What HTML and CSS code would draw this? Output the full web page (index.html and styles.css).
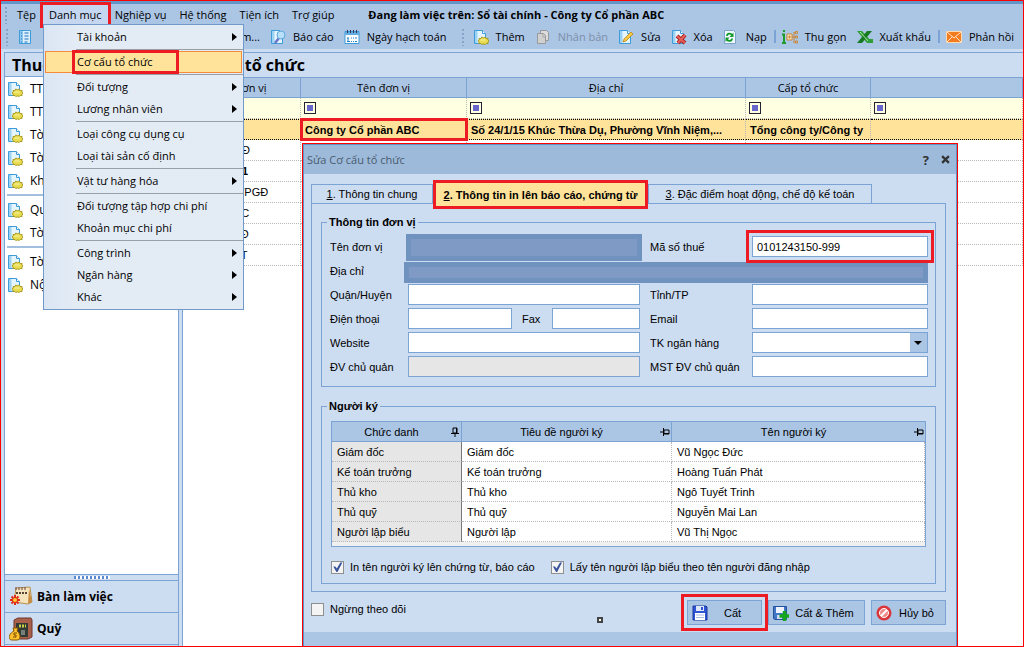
FILE: index.html
```html
<!DOCTYPE html>
<html lang="vi">
<head>
<meta charset="utf-8">
<meta name="viewport" content="width=device-width, initial-scale=1.0">
<title>Cơ cấu tổ chức</title>
<link rel="stylesheet" href="styles.css">
</head>
<body>
<svg class="defs" width="0" height="0">
  <symbol id="page" viewBox="0 0 16 16">
    <path d="M1.500 1.500h8l3 3v10h-11z" fill="#e6f5fd" stroke="#3d9bd8"/>
    <path d="M2 2h2.500v12H2z" fill="#9ed2f3"/>
    <path d="M9.500 1.500v3h3" fill="#fff" stroke="#3d9bd8"/>
  </symbol>
  <symbol id="new" viewBox="0 0 16 16">
    <use href="#page"/>
    <path d="M6 9.500l2 0 .7-1.500 1.800.8 1.800-.8.8 1.500 2 0-.3 1.500 1.200 1-1.200 1 .3 1.500-2 0-.8 1-1.800-.6-1.800.6-.8-1-2 0 .3-1.500-1.200-1 1.200-1z" fill="#e8dc50" stroke="#a5961c" stroke-width=".9"/>
    <path d="M7.500 11h5" stroke="#f8f3a8"/>
  </symbol>
  <symbol id="pin" viewBox="0 0 10 10">
    <path d="M3 1h4v5H3zM1 6.500h8M5 7v3M6.500 1v5" fill="none" stroke="#000"/>
  </symbol>
</svg>
<div class="app">
  <header class="top">
    <nav class="menubar">
      <i class="grip"></i>
      <button>Tệp</button>
      <button class="open marked">Danh mục</button>
      <button>Nghiệp vụ</button>
      <button>Hệ thống</button>
      <button>Tiện ích</button>
      <button>Trợ giúp</button>
      <strong>Đang làm việc trên: Sổ tài chính - Công ty Cổ phần ABC</strong>
    </nav>
    <div class="toolbar">
      <i class="grip"></i>
      <button class="first" aria-label="Danh sách"><svg viewBox="0 0 16 16"><path d="M2.500 1.500h11v13h-11z" fill="#d9effc" stroke="#3d9bd8"/><path d="M3 2h3v12H3z" fill="#8cc8f0"/><path d="M4 4h1M4 7h1M4 10h1M4 13h1M7.500 4h4M7.500 7h4M7.500 10h4M7.500 13h3" stroke="#2070b8"/></svg></button>
      <button class="search">Tìm kiếm...</button>
      <button><svg viewBox="0 0 16 16"><use href="#page"/><path d="M5 14l4-5" stroke="#6a74c8" stroke-width="2.500"/><circle cx="11" cy="6" r="4" fill="#b9e0f8" stroke="#5ca9df"/></svg>Báo cáo</button>
      <button><svg viewBox="0 0 16 16"><path d="M1 2.500h14v12H1z" fill="#fff" stroke="#3d9bd8"/><path d="M1 3h14v3H1z" fill="#62aee2"/><path d="M3.500 1v3M6.500 1v3M9.500 1v3M12.500 1v3" stroke="#335"/><path d="M3 9h2M7 9h1M9 9h1M11 9h2M4 9v4M3 12.500h3M7 12.500h1M9 12.500h1M11 12.500h2" stroke="#2381c8"/></svg>Ngày hạch toán</button>
      <i class="grip"></i>
      <button><svg viewBox="0 0 16 16"><use href="#new"/></svg>Thêm</button>
      <button disabled><svg viewBox="0 0 16 16"><path d="M5.500 1.500h6l2 2v8h-8z" fill="#ddd" stroke="#999"/><path d="M2.500 4.500h6l2 2v8h-8z" fill="#d0d0d0" stroke="#999"/><path d="M8 5v3h2" fill="none" stroke="#aaa"/></svg>Nhân bản</button>
      <button><svg viewBox="0 0 16 16"><use href="#page"/><path d="M5 13l1-3 7-7 2 2-7 7z" fill="#f7c948" stroke="#b98718" stroke-width=".8"/></svg>Sửa</button>
      <button><svg viewBox="0 0 16 16"><use href="#page"/><path d="M6 7l8 7M14 6l-7 8" stroke="#a52020" stroke-width="4"/><path d="M6 7l8 7M14 6l-7 8" stroke="#e8605c" stroke-width="2"/></svg>Xóa</button>
      <button><svg viewBox="0 0 16 16"><path d="M1.500 1.500h9l2 2v11h-11z" fill="#f2f8ff" stroke="#7ba3cc"/><path d="M4 7c0-3 4-3 5-1M9 9.500c0 3-4 3-5 1" fill="none" stroke="#159a2c" stroke-width="1.800"/><path d="M10.500 3.500V8H6.500zM2.500 13V8.500h4z" fill="#159a2c"/></svg>Nạp</button>
      <i class="bar"></i>
      <button><svg viewBox="0 0 16 16"><path d="M2 1v2M0 5.500h2v8M0 14h4" fill="none" stroke="#1f9d2c" stroke-width="2"/><path d="M5 5h5v6H5z" fill="#fbe3bd"/><path d="M5 5h5v6H5zM6 8h3M7.500 6.500v3M10 8h2M12 3v11M12 3.500h1M12 8h1M12 13.500h1M13.500 2.500h2v2h-2zM13.500 7h2v2h-2zM13.500 12h2v2h-2z" fill="none" stroke="#c9873a"/></svg>Thu gọn</button>
      <button><svg viewBox="0 0 16 16"><path d="M0 2h5l11 12h-6z" fill="#2f9e36"/><path d="M10 2h5L5 14H0z" fill="#167a22"/><path d="M3 3l9 10" stroke="#b6e3b0"/><path d="M11 10h5v4h-5z" fill="#2f9e36"/></svg>Xuất khẩu</button>
      <i class="bar"></i>
      <button><svg viewBox="0 0 16 16"><path d="M.5 2.500h15v11H.5z" fill="#f47c20" stroke="#ffd9b0"/><path d="M1 3l7 6 7-6M1 13l5-5M15 13l-5-5" fill="none" stroke="#ffe6cc"/></svg>Phản hồi</button>
    </div>

    <ul class="menu">
      <li><button class="sub">Tài khoản</button></li>
      <li class="sep"></li>
      <li><button class="active"><span class="marked">Cơ cấu tổ chức</span></button></li>
      <li class="sep"></li>
      <li><button class="sub">Đối tượng</button></li>
      <li><button class="sub">Lương nhân viên</button></li>
      <li class="sep"></li>
      <li><button>Loại công cụ dụng cụ</button></li>
      <li><button>Loại tài sản cố định</button></li>
      <li class="sep"></li>
      <li><button class="sub">Vật tư hàng hóa</button></li>
      <li class="sep"></li>
      <li><button>Đối tượng tập hợp chi phí</button></li>
      <li><button>Khoản mục chi phí</button></li>
      <li class="sep"></li>
      <li><button class="sub">Công trình</button></li>
      <li><button class="sub">Ngân hàng</button></li>
      <li><button class="sub">Khác</button></li>
    </ul>
  </header>

  <div class="main">
    <aside class="side">
      <h2>Thuế</h2>
      <ul class="tasks">
        <li><svg><use href="#new"/></svg>TT</li>
        <li><svg><use href="#new"/></svg>TT</li>
        <li><svg><use href="#new"/></svg>Tờ khai</li>
        <li><svg><use href="#new"/></svg>Tờ khai</li>
        <li><svg><use href="#new"/></svg>Khai</li>
        <li class="sep"></li>
        <li><svg><use href="#new"/></svg>Quý</li>
        <li><svg><use href="#new"/></svg>Tờ khai</li>
        <li class="sep"></li>
        <li><svg><use href="#new"/></svg>Tờ khai</li>
        <li><svg><use href="#new"/></svg>Nộp</li>
      </ul>
      <div class="splitter"><i></i></div>
      <button class="module"><svg viewBox="0 0 24 24"><path d="M7 3l14-1 2 15-4 2-14-2z" fill="#f4e3bb" stroke="#b79050"/><path d="M20 4l3 13-4 2z" fill="#c78a3e"/><path d="M7 2v3M10 2v3M13 2v3M16 2v3" stroke="#644"/><path d="M7 8h11" stroke="#543" stroke-width="2" stroke-dasharray="2 1"/><path d="M6 10v10M1 15h10M2.500 11.500l7 7M9.500 11.500l-7 7" stroke="#e02d18" stroke-width="2"/><circle cx="6" cy="15" r="2" fill="#fc3"/></svg>Bàn làm việc</button>
      <button class="module"><svg viewBox="0 0 24 24"><path d="M5 3l4-2h13l1 2v17l-4 2H5z" fill="#a9604a" stroke="#71392a"/><path d="M7 6h12v14H7z" fill="#333a35"/><path d="M10 9h7" stroke="#c9cf45" stroke-width="3" stroke-dasharray="2 1"/><path d="M12 13h4v5h-4z" fill="#778078"/><path d="M4 11h5l-1 3c4 3 4 9 0 9H3c-4 0-4-6 2-9z" fill="#fbc02d" stroke="#8a5a00"/><path d="M8 16H5v2h2v2H4" fill="none" stroke="#7a4a00"/></svg>Quỹ</button>
      <div class="rest"></div>
    </aside>

    <main class="content">
      <h2>Cơ cấu tổ chức</h2>
      <table class="grid">
        <colgroup><col class="c-code"><col class="c-name"><col class="c-addr"><col class="c-level"><col></colgroup>
        <thead>
          <tr><th>Mã đơn vị</th><th>Tên đơn vị</th><th>Địa chỉ</th><th>Cấp tổ chức</th><th></th></tr>
        </thead>
        <tbody>
          <tr class="filter"><td><i></i></td><td><i></i></td><td><i></i></td><td><i></i></td><td><i></i></td></tr>
          <tr class="selected"><td>ABC</td><td class="marked">Công ty Cổ phần ABC</td><td>Số 24/1/15 Khúc Thừa Dụ, Phường Vĩnh Niệm,...</td><td>Tổng công ty/Công ty</td><td></td></tr>
          <tr><td class="lv1">HĐ</td><td></td><td></td><td></td><td></td></tr>
          <tr><td class="lv1"><b>N1</b></td><td></td><td></td><td></td><td></td></tr>
          <tr><td class="lv2">VPGĐ</td><td></td><td></td><td></td><td></td></tr>
          <tr><td class="lv1">PC</td><td></td><td></td><td></td><td></td></tr>
          <tr><td class="lv1">TĐ</td><td></td><td></td><td></td><td></td></tr>
          <tr><td class="lv1">TT</td><td></td><td></td><td></td><td></td></tr>
        </tbody>
      </table>
    </main>
  </div>

  <form class="dialog" role="dialog" aria-labelledby="dlg-title">
    <div class="titlebar">
      <span id="dlg-title">Sửa Cơ cấu tổ chức</span>
      <button type="button">?</button>
      <button type="button" aria-label="Đóng"><svg viewBox="0 0 8 8"><path d="M1 1l6 6M7 1L1 7" stroke="#333" stroke-width="2"/></svg></button>
    </div>
    <div class="body">
      <div class="tabs">
        <button type="button" class="t1"><u>1</u>. Thông tin chung</button>
        <button type="button" class="t2 marked"><u>2</u>. Thông tin in lên báo cáo, chứng từ</button>
        <button type="button" class="t3"><u>3</u>. Đặc điểm hoạt động, chế độ kế toán</button>
      </div>
      <div class="panel">
        <fieldset>
          <legend>Thông tin đơn vị</legend>
          <div class="fields">
            <label for="ten">Tên đơn vị</label>
            <input id="ten" class="masked" disabled>
            <label for="mst">Mã số thuế</label>
            <input id="mst" class="marked" value="0101243150-999">
            <label for="diachi">Địa chỉ</label>
            <input id="diachi" class="masked wide" disabled>
            <label for="quan">Quận/Huyện</label>
            <input id="quan">
            <label for="tinh">Tỉnh/TP</label>
            <input id="tinh">
            <label for="dt">Điện thoại</label>
            <div class="phone">
              <input id="dt">
              <label for="fax">Fax</label>
              <input id="fax">
            </div>
            <label for="email">Email</label>
            <input id="email">
            <label for="web">Website</label>
            <input id="web">
            <label for="tk">TK ngân hàng</label>
            <div class="combo"><select id="tk"><option></option></select></div>
            <label for="dv">ĐV chủ quản</label>
            <input id="dv" disabled>
            <label for="mstdv">MST ĐV chủ quản</label>
            <input id="mstdv">
          </div>
        </fieldset>
        <fieldset class="signers">
          <legend>Người ký</legend>
          <div class="frame">
            <table>
              <colgroup><col class="s-role"><col class="s-title"><col></colgroup>
              <thead>
                <tr>
                  <th><div>Chức danh<svg><use href="#pin"/></svg></div></th>
                  <th><div>Tiêu đề người ký<svg class="side-pin"><use href="#pin"/></svg></div></th>
                  <th><div>Tên người ký<svg class="side-pin"><use href="#pin"/></svg></div></th>
                </tr>
              </thead>
              <tbody>
                <tr><td>Giám đốc</td><td>Giám đốc</td><td>Vũ Ngọc Đức</td></tr>
                <tr><td>Kế toán trưởng</td><td>Kế toán trưởng</td><td>Hoàng Tuấn Phát</td></tr>
                <tr><td>Thủ kho</td><td>Thủ kho</td><td>Ngô Tuyết Trinh</td></tr>
                <tr><td>Thủ quỹ</td><td>Thủ quỹ</td><td>Nguyễn Mai Lan</td></tr>
                <tr><td>Người lập biểu</td><td>Người lập</td><td>Vũ Thị Ngọc</td></tr>
              </tbody>
            </table>
          </div>
          <div class="checks">
            <label><input type="checkbox" checked>In tên người ký lên chứng từ, báo cáo</label>
            <label><input type="checkbox" checked>Lấy tên người lập biểu theo tên người đăng nhập</label>
          </div>
        </fieldset>
      </div>
      <div class="actions">
        <label><input type="checkbox">Ngừng theo dõi</label>
        <i class="handle"></i>
        <button type="button" class="save marked"><svg viewBox="0 0 16 16"><path d="M1 1h13l1 1v13H1z" fill="#2f55d4" stroke="#1c389e"/><path d="M4 1h8v5H4z" fill="#dfe8fb"/><path d="M9 2h2v3H9z" fill="#2f55d4"/><path d="M3 8h10v7H3z" fill="#fff"/><path d="M4 10h8M4 12.500h8" stroke="#a9b9e6"/></svg><span>Cất</span></button>
        <button type="button" class="save-add"><svg viewBox="0 0 16 16"><path d="M.5 1.500h13v13H2l-1.500-1z" fill="#4277c8" stroke="#24509c"/><path d="M3 2h8v6H3z" fill="#eef4fd"/><path d="M4 10h5v4H4z" fill="#cfdcf2"/><path d="M11.500 6v10M6.500 11h10" stroke="#16a51e" stroke-width="3.500"/></svg><span>Cất &amp; Thêm</span></button>
        <button type="button" class="cancel"><svg viewBox="0 0 16 16"><circle cx="8" cy="8" r="7.500" fill="#d9363a"/><circle cx="8" cy="8" r="4.500" fill="#ef8c8a" stroke="#fff"/><path d="M5 11l6-6" stroke="#fff" stroke-width="2"/></svg><span>Hủy bỏ</span></button>
      </div>
    </div>
    <div class="status"></div>
  </form>
</div>
</body>
</html>
```
FILE: styles.css
```css
* { box-sizing: border-box; }
body {
  margin: 0;
  font: 11px/16px "Liberation Sans", Arial, sans-serif;
  color: #000;
  background: #ccdcf1;
}
button, input, select { font: inherit; color: inherit; margin: 0; }
button { border: 0; padding: 0; background: none; white-space: nowrap; }
ul { list-style: none; margin: 0; padding: 0; }
.defs { position: absolute; }
.marked { outline: 3px solid #ed1c24; }

.app {
  position: relative;
  display: flex;
  flex-direction: column;
  height: 100vh;
  border: 1px solid #f00;
  overflow: hidden;
}

/* menu bar and toolbar */
.top {
  position: relative;
  border-top: 3px solid #6495c8;
  background: #abc5e5;
  font-family: "Open Sans", "Noto Sans", sans-serif;
}
.menubar, .toolbar { display: flex; align-items: center; height: 22px; }
.menubar { gap: 1px; }
.toolbar { height: 23px; gap: 10px; padding-bottom: 2px; }
.menubar button { height: 20px; padding: 0 6px; }
.menubar .open { background: #c5d6f0; }
.menubar strong { margin-left: 27px; white-space: nowrap; }
.grip {
  flex: none;
  width: 4px;
  height: 18px;
  margin-left: 3px;
  margin-right: 2px;
  background: radial-gradient(circle, #86a3c8 1px, transparent 1px) 0 0 / 4px 4px;
}
.toolbar .grip { margin: 0 -2px 0 4px; }
.toolbar button { display: flex; align-items: center; gap: 7px; flex: none; }
.toolbar button:disabled { color: #7d8fa8; }
.toolbar svg { width: 16px; height: 16px; }
.toolbar .search { width: 217px; justify-content: flex-end; }
.bar { width: 2px; height: 13px; margin: 0 -4px 0 -3px; background: #7ba3d4; }

.menu {
  position: absolute;
  z-index: 5;
  top: 20px;
  left: 42px;
  width: 201px;
  padding: 1px;
  border: 1px solid #7199c9;
  background: linear-gradient(90deg, #dbe6f4, #e3ebf5 32px);
}
.menu li { display: flex; }
.menu .sep { height: 1px; margin: 1px -1px 1px 31px; background: #9a9fa6; }
.menu button {
  flex: 1;
  display: flex;
  align-items: center;
  justify-content: space-between;
  height: 22px;
  padding: 0 4px 0 31px;
  border: 1px solid transparent;
}
.menu .active { border-color: #f58b3c; background: #ffe39b; }
.menu .active span { padding: 1px 24px 1px 2px; margin-left: -2px; }
.menu .sub::after {
  content: "";
  border: 4px solid transparent;
  border-left: 5px solid #000;
  border-right: 0;
}

/* left pane */
.main { flex: 1; display: flex; gap: 3px; padding: 3px 0 0 3px; min-height: 0; }
h2 {
  margin: 0;
  padding: 0 7px;
  font: bold 16px/24px "Open Sans", "Noto Sans", sans-serif;
}
.side {
  display: flex;
  flex-direction: column;
  width: 175px;
  border: 1px solid #7ba3d4;
  border-bottom: 0;
}
.side h2 { height: 24px; border-bottom: 1px solid #7ba3d4; }
.tasks {
  flex: 1;
  background: #fff;
  font: 12px/23px "Open Sans", "Noto Sans", sans-serif;
}
.tasks li { display: flex; align-items: center; gap: 7px; height: 23px; padding-left: 2px; }
.tasks svg { width: 16px; height: 16px; }
.tasks .sep { height: 2px; margin: 2px; background: #a3bfe0; }
.splitter {
  display: flex;
  justify-content: center;
  align-items: center;
  height: 7px;
  border: solid #7ba3d4;
  border-width: 1px 0;
}
.splitter i { width: 36px; height: 3px; background: repeating-linear-gradient(90deg, #5b88d0 0 2px, #fff 2px 4px); }
.module {
  display: flex;
  align-items: center;
  gap: 8px;
  height: 32px;
  padding-left: 4px;
  border-bottom: 1px solid #7ba3d4;
  font: bold 12px "Open Sans", "Noto Sans", sans-serif;
}
.module svg { width: 24px; height: 24px; margin-right: -4px; }
.rest { height: 1px; }

/* organisation grid */
.content {
  flex: 1;
  min-width: 0;
  border: solid #7ba3d4;
  border-width: 1px 0 0 1px;
  background: #fff;
}
.content h2 { padding: 0 4px; background: #ccdcf1; }
.grid, .signers table { width: 100%; border-collapse: separate; border-spacing: 0; table-layout: fixed; }
.c-code { width: 118px; }
.c-name { width: 166px; }
.c-addr { width: 279px; }
.c-level { width: 125px; }
.grid th {
  height: 21px;
  padding: 0;
  border: solid #7ba3d4;
  border-width: 1px 1px 1px 0;
  background: #abc5e5;
  font: 11px/16px "Open Sans", "Noto Sans", sans-serif;
}
.grid td {
  height: 21px;
  padding: 0 0 0 4px;
  border: dotted #b8b8b8;
  border-width: 0 1px 1px 0;
  overflow: hidden;
  white-space: nowrap;
}
.grid .filter td { padding-left: 3px; background: #ffffe1; }
.filter i {
  display: block;
  width: 12px;
  height: 12px;
  border: 1px solid #223;
  background: #66c content-box;
  padding: 2px;
}
.grid .selected td {
  background: #ffe39b;
  border-top: 1px dotted #000;
  border-bottom: 1px dotted #000;
  font-weight: bold;
}
.grid .marked { outline-offset: -2px; }
.grid .lv1 { padding-left: 51px; }
.grid .lv2 { padding-left: 54px; }

/* edit dialog */
.dialog {
  position: absolute;
  top: 142px;
  left: 301px;
  width: 656px;
  border: 1px solid #f00;
  background: #ccdcf1;
  box-shadow: inset 0 0 0 1px #5f92c6;
}
.titlebar {
  display: flex;
  align-items: center;
  gap: 12px;
  height: 30px;
  padding: 0 6px 0 3px;
  border: 1px solid #5f92c6;
  border-bottom: 0;
  background: #9dbada;
  color: #4a5a6e;
  font-family: "Open Sans", "Noto Sans", sans-serif;
}
.titlebar span { flex: 1; }
.titlebar button { color: #333; font-weight: bold; font-size: 13px; }
.titlebar svg { display: block; width: 9px; height: 9px; }
.body { padding: 10px 11px 0 8px; }
.tabs { display: flex; height: 19px; }
.tabs button { border: 1px solid #7ba3d4; border-bottom: 0; }
.t1 { width: 122px; }
.tabs .t2 {
  z-index: 1;
  width: 215px;
  margin: -4px 0 -6px;
  border: 0;
  outline-offset: -3px;
  background: #ffe39b;
  font-weight: bold;
}
.t3 { width: 224px; }
.panel { padding: 10px 9px 7px 9px; border: 1px solid #7ba3d4; }
fieldset { min-width: 0; margin: 0; padding: 6px 7px 9px 8px; border: 1px solid #7ba3d4; }
legend { margin-left: -3px; padding: 0 2px; font-weight: bold; }
.fields {
  display: grid;
  grid-template-columns: 68px 1fr 92px 176px;
  grid-auto-rows: 21px;
  gap: 3px 10px;
  align-items: center;
}
.fields label { white-space: nowrap; }
.fields input, .combo {
  width: 100%;
  min-width: 0;
  height: 21px;
  padding: 0 4px;
  border: 1px solid #7ba3d4;
  border-radius: 0;
  background: #fff;
}
.fields input:disabled { background: #e6e6e6; }
.fields .marked { position: relative; outline-offset: 3px; }
.fields .masked:disabled {
  width: auto;
  height: 27px;
  margin: -2px -2px -4px;
  border: 5px solid #7092bf;
  background: #7e9ac5;
}
.fields .wide:disabled { grid-column: span 3; height: 21px; margin: 2px 0 -2px -4px; }
.phone { display: flex; align-items: center; gap: 10px; }
.phone #dt { flex: 0 0 104px; }
.phone label { flex: 0 0 20px; }
.phone #fax { flex: 1; }
.combo { display: flex; position: relative; padding: 0; }
.combo select { appearance: none; width: 100%; border: 0; background: #fff; }
.combo::after {
  content: "";
  position: absolute;
  right: 0;
  width: 17px;
  height: 19px;
  background: #abc5e5;
  pointer-events: none;
}
.combo::before {
  content: "";
  position: absolute;
  z-index: 1;
  right: 5px;
  top: 8px;
  border: 4px solid transparent;
  border-top-color: #000;
  border-bottom: 0;
  pointer-events: none;
}

.signers { margin-top: 11px; padding: 7px 9px 8px 8px; }
.frame { margin-left: 1px; height: 126px; border: 1px solid #7ba3d4; background: #f0f0f0; }
.s-role { width: 130px; }
.s-title { width: 210px; }
.signers th {
  height: 20px;
  padding: 0;
  border: solid #7ba3d4;
  border-width: 0 1px 1px 0;
  background: #abc5e5;
  font-weight: normal;
}
.signers th:last-child { border-right: 0; }
.signers th div { display: flex; align-items: center; justify-content: center; position: relative; padding-right: 10px; }
.signers th svg { position: absolute; right: 1px; width: 10px; height: 10px; }
.side-pin { transform: rotate(90deg); }
.signers td {
  height: 20px;
  padding: 0 5px;
  border: dotted #b8b8b8;
  border-width: 0 1px 1px 0;
  background: #fff;
}
.signers td:first-child { border-right: 1px solid #777; background: #e6e6e6; }
.checks { display: flex; gap: 16px; margin: 12px 0 0 1px; }
.checks label, .actions label { display: flex; align-items: center; gap: 6px; }
input[type="checkbox"] {
  appearance: none;
  width: 13px;
  height: 13px;
  border: 1px solid #8e8f8f;
  background: #f4f4f4;
}
input[type="checkbox"]:checked::after {
  content: "";
  display: block;
  height: 11px;
  background: #39539c;
  clip-path: polygon(12% 45%, 30% 45%, 44% 64%, 76% 8%, 94% 8%, 50% 96%, 40% 96%);
}
.actions { display: flex; gap: 6px; padding: 8px 0 7px; }
.actions label { flex: 1; align-self: flex-start; padding-top: 1px; }
.handle { width: 6px; height: 6px; margin: 17px 78px 0 0; border: 2px solid #444; background: #fff; }
.actions button {
  display: flex;
  align-items: center;
  width: 75px;
  height: 25px;
  padding: 0 4px;
  border: 1px solid #7ba3d4;
  background: #abc5e5;
}
.actions svg { width: 16px; height: 16px; }
.actions span { flex: 1; text-align: center; }
.actions .save-add { width: 97px; }
.actions .save { outline-offset: 3px; }
.status { height: 16px; margin: 0 1px; background: #abc5e5; }
```
